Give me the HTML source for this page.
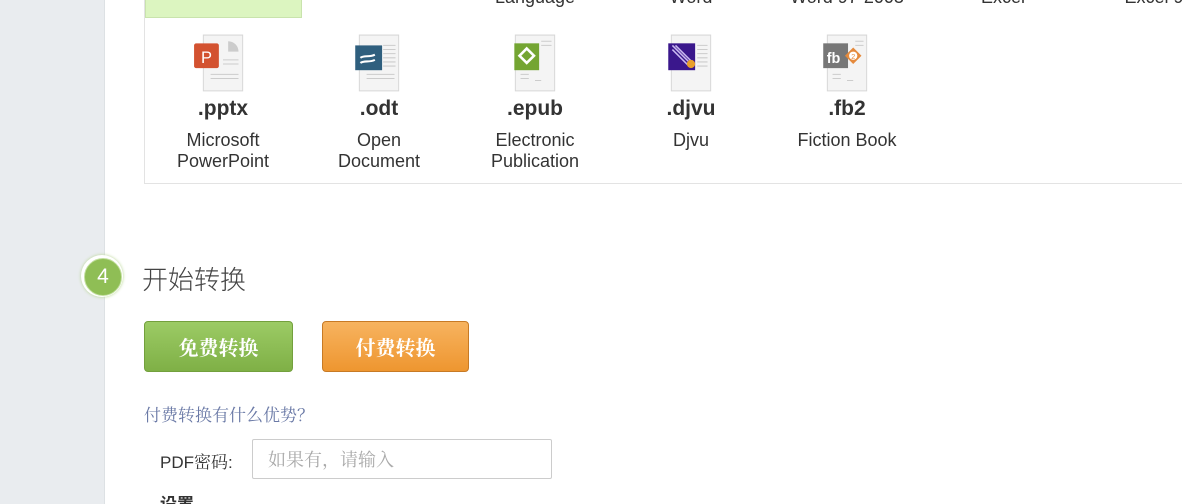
<!DOCTYPE html>
<html><head><meta charset="utf-8"><style>
html,body{margin:0;width:1182px;height:504px;overflow:hidden}
body{background:#fff;font-family:"Liberation Sans","Noto Sans CJK SC",sans-serif;position:relative}
.side{position:absolute;left:0;top:0;width:104px;height:504px;background:#e9ecef;border-right:1px solid #dde1e4}
.panel{position:absolute;left:144px;top:-10px;width:1050px;height:193px;border-left:1px solid #e3e3e3;border-bottom:1px solid #e3e3e3}
.green{position:absolute;left:145px;top:0;width:155px;height:17px;background:#dcf5c0;border:1px solid #c9e3ad;border-top:none}
.top{position:absolute;top:-13px;width:156px;text-align:center;font-size:18px;color:#333}
.col{position:absolute;top:33px;width:156px;text-align:center;color:#333}
.ext{font-weight:bold;font-size:21px;margin-top:2px;height:30px}
.desc{font-size:18px;line-height:21px;margin-top:3px}
.ic{display:block;margin:0 auto}
.btn{position:absolute;top:321px;height:49px;border-radius:4px;color:#fff;font-family:"Noto Serif CJK SC",serif;font-weight:bold;font-size:20px;line-height:49px;text-align:center}
</style></head><body>
<div class="side"></div>
<div class="panel"></div>
<div class="green"></div>
<div class="top" style="left:457px">Language</div>
<div class="top" style="left:613px">Word</div>
<div class="top" style="left:769px">Word 97-2003</div>
<div class="top" style="left:925px">Excel</div>
<div class="top" style="left:1081px">Excel 97</div>

<div class="col" style="left:145px">
<svg class="ic" width="62" height="62" viewBox="0 0 60 60"><path d="M11 2h38v54H11z" fill="#f4f4f4" stroke="#d8d8d8"/><path d="M35 8a10 10 0 0 1 10 10H35z" fill="#ccc"/><path d="M30 26h15M30 30h15M18 40h27M18 44h27" stroke="#ccc"/><rect x="2" y="10" width="24" height="24" rx="2" fill="#d35230"/><text x="14" y="29" font-size="16" fill="#fff" text-anchor="middle" font-family="Liberation Sans">P</text></svg>
<div class="ext">.pptx</div><div class="desc">Microsoft<br>PowerPoint</div></div>

<div class="col" style="left:301px">
<svg class="ic" width="62" height="62" viewBox="0 0 60 60"><path d="M11 2h38v54H11z" fill="#f4f4f4" stroke="#d8d8d8"/><path d="M34 12h12M34 16h12M34 20h12M34 24h12M34 28h12M34 32h12M18 40h27M18 44h27" stroke="#ccc"/><rect x="7" y="12" width="26" height="24" fill="#2f5f7e"/><path d="M12 24c4-3 8 0 14-3M12 29c4-3 8 0 14-3" stroke="#fff" stroke-width="2" fill="none"/></svg>
<div class="ext">.odt</div><div class="desc">Open<br>Document</div></div>

<div class="col" style="left:457px">
<svg class="ic" width="62" height="62" viewBox="0 0 60 60"><path d="M11 2h38v54H11z" fill="#f4f4f4" stroke="#d8d8d8"/><path d="M36 8h10M36 12h10M16 40h8M16 44h8M30 46h6" stroke="#ccc"/><rect x="10" y="10" width="24" height="26" fill="#74a532"/><path d="M22 15l7 7-7 7-7-7z" fill="none" stroke="#fff" stroke-width="2.5"/></svg>
<div class="ext">.epub</div><div class="desc">Electronic<br>Publication</div></div>

<div class="col" style="left:613px">
<svg class="ic" width="62" height="62" viewBox="0 0 60 60"><path d="M11 2h38v54H11z" fill="#f4f4f4" stroke="#d8d8d8"/><path d="M36 12h10M36 16h10M36 20h10M36 24h10M36 28h10M36 32h10" stroke="#ccc"/><rect x="8" y="10" width="26" height="26" fill="#3a178c"/><path d="M12 12l18 18M15 12l18 18M12 16l16 16" stroke="#c9b8f0" stroke-width="1.5"/><circle cx="30" cy="30" r="4" fill="#e9a02b"/></svg>
<div class="ext">.djvu</div><div class="desc">Djvu</div></div>

<div class="col" style="left:769px">
<svg class="ic" width="62" height="62" viewBox="0 0 60 60"><path d="M11 2h38v54H11z" fill="#f4f4f4" stroke="#d8d8d8"/><path d="M38 8h8M38 12h8M16 40h8M16 44h8M30 46h6" stroke="#ccc"/><rect x="7" y="10" width="24" height="24" fill="#777"/><text x="17" y="29" font-size="14" fill="#fff" text-anchor="middle" font-family="Liberation Sans" font-weight="bold">fb</text><path d="M36 14l8 8-8 8-8-8z" fill="#e58a3c"/><circle cx="36" cy="22" r="4" fill="#fff"/><text x="36" y="25" font-size="7" fill="#e58a3c" text-anchor="middle" font-family="Liberation Sans">2</text></svg>
<div class="ext">.fb2</div><div class="desc">Fiction Book</div></div>

<div style="position:absolute;left:81px;top:255px;width:42px;height:42px;border-radius:50%;background:#fff;box-shadow:0 0 3px #b6d58f"></div>
<div style="position:absolute;left:84px;top:258px;width:36px;height:36px;border-radius:50%;background:#8fbe55;border:1px solid #c2df9e;color:#fff;font-size:21px;line-height:36px;text-align:center">4</div>
<div style="position:absolute;left:142px;top:260px;font-size:26px;color:#444;font-family:'Noto Sans CJK SC',sans-serif;font-weight:300">开始转换</div>
<div class="btn" style="left:144px;width:147px;background:linear-gradient(#9ccb65,#7fb046);border:1px solid #73a03d">免费转换</div>
<div class="btn" style="left:322px;width:145px;background:linear-gradient(#f7b35f,#ee9630);border:1px solid #c77a25">付费转换</div>
<div style="position:absolute;left:144px;top:401px;font-size:17px;color:#6a79a6;font-family:'Noto Serif CJK SC',serif">付费转换有什么优势？</div>
<div style="position:absolute;left:160px;top:448px;font-size:17px;color:#333">PDF<span style="font-family:'Noto Serif CJK SC',serif">密码</span>:</div>
<div style="position:absolute;left:252px;top:439px;border:1px solid #ccc;border-radius:2px;font-family:'Noto Serif CJK SC',serif;font-size:18px;color:#aaa;line-height:38px;padding-left:15px;box-sizing:border-box;width:300px;height:40px">如果有，请输入</div>
<div style="position:absolute;left:160px;top:490px;font-size:17px;color:#333;font-weight:bold">设置</div>
</body></html>
